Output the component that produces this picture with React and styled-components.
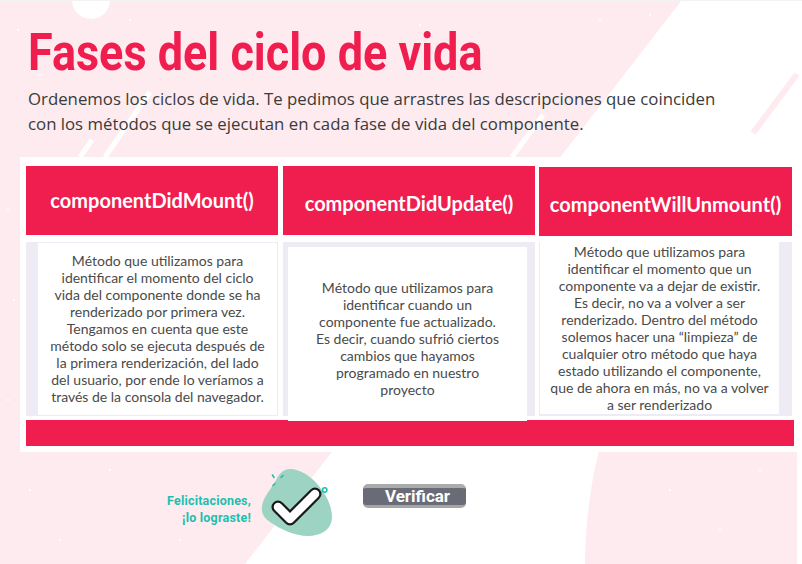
import styled, { createGlobalStyle } from 'styled-components';

const GlobalStyle = createGlobalStyle`
  html, body {
    margin: 0;
    padding: 0;
    background: #ffffff;
  }
`;

const Page = styled.div`
  position: relative;
  width: 802px;
  height: 564px;
  overflow: hidden;
  background: #ffffff;
`;

const Backdrop = styled.svg`
  position: absolute;
  left: 0;
  top: 0;
`;

const Content = styled.div`
  position: relative;
  width: 797px;
  padding-top: 25px;
`;

const Title = styled.h1`
  margin: 0 0 0 28px;
  font-family: Roboto, sans-serif;
  font-weight: 700;
  font-size: 52px;
  line-height: 56px;
  color: #f01d4f;
  white-space: nowrap;
  transform: scaleX(0.865);
  transform-origin: left center;
`;

const Intro = styled.p`
  margin: 5px 0 0 28px;
  font-family: 'Open Sans', sans-serif;
  font-size: 16.8px;
  line-height: 25px;
  color: #3a3a3a;
  white-space: nowrap;
`;

const Panel = styled.section`
  margin: 21px 0 0 20px;
  padding: 9px 3px 6px 6px;
  background: #ffffff;
`;

const Columns = styled.div`
  display: flex;
`;

const Column = styled.div`
  width: ${(p) => p.$width}px;
  margin-left: ${(p) => p.$left}px;
  padding-top: ${(p) => p.$top}px;
`;

const Header = styled.h2`
  display: flex;
  justify-content: center;
  margin: 0;
  height: 69px;
  box-sizing: border-box;
  padding-top: ${(p) => p.$textTop}px;
  background: #f01d4f;
  color: #ffffff;
  font-family: Lato, sans-serif;
  font-weight: 700;
  font-size: 20px;
  line-height: 28px;
  white-space: nowrap;
`;

const Slot = styled.div`
  display: flex;
  justify-content: ${(p) => p.$align};
  height: ${(p) => p.$height}px;
  margin-top: ${(p) => p.$gap}px;
  padding: ${(p) => p.$inset};
  box-sizing: border-box;
  background: #efebf4;
`;

const Card = styled.div`
  position: relative;
  display: flex;
  flex-direction: column;
  justify-content: center;
  width: 239px;
  height: ${(p) => p.$height}px;
  flex: none;
  box-sizing: border-box;
  padding-bottom: ${(p) => p.$textBottom}px;
  padding-top: ${(p) => p.$textTop}px;
  background: #ffffff;
  text-align: center;
  font-family: Lato, sans-serif;
  font-size: 14px;
  line-height: 17px;
  color: #4a4a4a;
  white-space: nowrap;
`;

const Line = styled.span`
  display: block;
`;

const BottomBar = styled.div`
  width: 768px;
  height: 26px;
  margin-top: 4px;
  background: #f01d4f;
`;

const Footer = styled.div`
  display: flex;
  align-items: center;
  margin: 12px 0 0 165px;
`;

const Cheer = styled.div`
  width: 86px;
  margin-top: 16px;
  text-align: right;
  font-family: Roboto, sans-serif;
  font-weight: 700;
  font-size: 12.5px;
  letter-spacing: 0.2px;
  line-height: 17px;
  color: #1dbfae;
  white-space: nowrap;
`;

const Badge = styled.svg`
  display: block;
  margin-left: 7px;
`;

const VerifyButton = styled.button`
  width: 103px;
  height: 24px;
  margin: -10px 0 0 23px;
  padding: 0 0 2px 6px;
  border: 0;
  border-top: 4px solid #ababab;
  border-bottom: 3px solid #a5a5a5;
  border-radius: 5px;
  box-sizing: border-box;
  background: #696c76;
  color: #ffffff;
  font-family: Roboto, sans-serif;
  font-weight: 700;
  font-size: 17px;
  line-height: 17px;
`;

const columns = [
  {
    name: 'componentDidMount()',
    width: 252, left: 0, top: 0, textTop: 20,
    slot: { height: 174, gap: 7, inset: '1px 1px 0 10px', align: 'flex-end' },
    card: { height: 172, textTop: 0, textBottom: 1 },
    lines: [
      'Método que utilizamos para',
      'identificar el momento del ciclo',
      'vida del componente donde se ha',
      'renderizado por primera vez.',
      'Tengamos en cuenta que este',
      'método solo se ejecuta después de',
      'la primera renderización, del lado',
      'del usuario, por ende lo veríamos a',
      'través de la consola del navegador.',
    ],
  },
  {
    name: 'componentDidUpdate()',
    width: 252, left: 5, top: 0, textTop: 23,
    slot: { height: 174, gap: 7, inset: '5px 0 0 5px', align: 'flex-start' },
    card: { height: 174, textTop: 9, textBottom: 0 },
    lines: [
      'Método que utilizamos para',
      'identificar cuando un',
      'componente fue actualizado.',
      'Es decir, cuando sufrió ciertos',
      'cambios que hayamos',
      'programado en nuestro',
      'proyecto',
    ],
  },
  {
    name: 'componentWillUnmount()',
    width: 253, left: 4, top: 1, textTop: 23,
    slot: { height: 174, gap: 6, inset: '0 11px 1px 1px', align: 'flex-start' },
    card: { height: 172, textTop: 0, textBottom: 1 },
    lines: [
      'Método que utilizamos para',
      'identificar el momento que un',
      'componente va a dejar de existir.',
      'Es decir, no va a volver a ser',
      'renderizado. Dentro del método',
      'solemos hacer una “limpieza” de',
      'cualquier otro método que haya',
      'estado utilizando el componente,',
      'que de ahora en más, no va a volver',
      'a ser renderizado',
    ],
  },
];

const specks = [
  [18, 30], [40, 75], [130, 20], [250, 40], [420, 25], [600, 20], [650, 15], [8, 210],
  [14, 300], [8, 400], [30, 490], [60, 540], [110, 470], [180, 540], [670, 490], [720, 530], [760, 470],
];

function BackgroundArt() {
  return (
    <Backdrop width="802" height="564" viewBox="0 0 802 564">
      <path d="M0 0H682L245 564H0Z" fill="#fdebef" />
      <circle cx="91" cy="0" r="19" fill="#ffffff" />
      <path d="M150 92L105 157M92 140L80 157M543 115L512 157" stroke="#ffffff" strokeWidth="5" />
      <path d="M797 74L753 133" stroke="#fdebef" strokeWidth="6" />
      <path d="M797 564H585C585 530 590 480 602 440H797Z" fill="#fdebef" />
      {specks.map(([x, y]) => (
        <circle key={`${x}-${y}`} cx={x} cy={y} r="1" fill="#ffffff" />
      ))}
      <path d="M0 0.5H802" stroke="#f3f3f3" />
    </Backdrop>
  );
}

function CheckBadge() {
  return (
    <Badge width="82" height="74" viewBox="18 4 82 74">
      <path
        d="M50 9C60 9 72 17 78 25C85 33 92 45 92 57C92 70 80 76 68 76C55 76 40 69 30 62C24 58 21 53 22 46C23 38 30 30 35 22C39 14 43 9 50 9Z"
        fill="#9dd3c2"
      />
      <path d="M38 47L50 59L75 34" fill="none" stroke="#1a1a1a" strokeWidth="13" strokeLinecap="round" strokeLinejoin="round" />
      <path d="M38 47L50 59L75 34" fill="none" stroke="#ffffff" strokeWidth="8.5" strokeLinecap="round" strokeLinejoin="round" />
      <path d="M32.5 15L34 17.5M41 17.5L43 15.5M33 25.5L35 23.5" stroke="#1dbfae" strokeWidth="1.6" strokeLinecap="round" />
      <circle cx="84.7" cy="30" r="2.2" fill="none" stroke="#1dbfae" strokeWidth="1.6" />
    </Badge>
  );
}

export default function App() {
  return (
    <Page>
      <GlobalStyle />
      <BackgroundArt />
      <Content>
        <Title>Fases del ciclo de vida</Title>
        <Intro>
          Ordenemos los ciclos de vida. Te pedimos que arrastres las descripciones que coinciden
          <br />
          con los métodos que se ejecutan en cada fase de vida del componente.
        </Intro>
        <Panel>
          <Columns>
            {columns.map((col) => (
              <Column key={col.name} $width={col.width} $left={col.left} $top={col.top}>
                <Header $textTop={col.textTop}>{col.name}</Header>
                <Slot $height={col.slot.height} $gap={col.slot.gap} $inset={col.slot.inset} $align={col.slot.align}>
                  <Card $height={col.card.height} $textTop={col.card.textTop} $textBottom={col.card.textBottom}>
                    {col.lines.map((line) => (
                      <Line key={line}>{line}</Line>
                    ))}
                  </Card>
                </Slot>
              </Column>
            ))}
          </Columns>
          <BottomBar />
        </Panel>
        <Footer>
          <Cheer>
            Felicitaciones,
            <br />
            ¡lo lograste!
          </Cheer>
          <CheckBadge />
          <VerifyButton>Verificar</VerifyButton>
        </Footer>
      </Content>
    </Page>
  );
}
